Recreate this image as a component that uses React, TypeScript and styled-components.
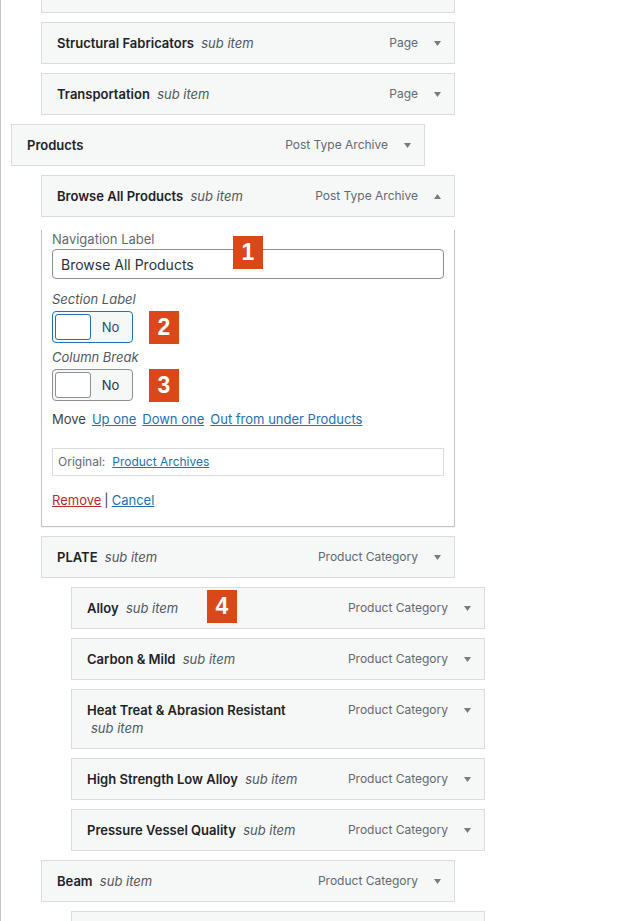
import React from 'react';
import styled, { createGlobalStyle } from 'styled-components';

const GlobalStyle = createGlobalStyle`
  html, body { margin: 0; padding: 0; background: #ffffff; overflow: hidden; }
  body {
    font-family: Inter, "Noto Sans", "Liberation Sans", sans-serif;
    -webkit-font-smoothing: antialiased;
    color: #3c434a;
  }
  *, *::before, *::after { box-sizing: border-box; }
`;

const Page = styled.div`
  height: 100vh;
  overflow: hidden;
  border-left: 1px solid #c3c4c7;
  padding-left: 10px;
`;

const MenuList = styled.ul`
  list-style: none;
  margin: -38px 0 0;
  padding: 0;
`;

const MenuItem = styled.li<{ $depth: number }>`
  margin: 9px 0 0 ${(p) => p.$depth * 30}px;
  width: 414px;
`;

const Handle = styled.div`
  position: relative;
  display: flex;
  align-items: flex-start;
  min-height: 42px;
  padding: 11px 13px 11px 15px;
  border: 1px solid #dcdcde;
  background: #f6f7f7;
  font-size: 13px;
  line-height: 18px;
`;

const Title = styled.span`
  flex: none;
  width: 213px;
  font-weight: 600;
  color: #1d2327;
`;

const SubItem = styled.span`
  margin-left: 4px;
  font-style: italic;
  font-weight: 400;
  color: #50575e;
`;

const Controls = styled.span`
  margin-left: auto;
  display: flex;
  align-items: center;
  gap: 16px;
  height: 18px;
`;

const TypeLabel = styled.span`
  color: #646970;
  font-size: 12px;
`;

const ArrowIcon = styled.svg`
  display: block;
  width: 7px;
  height: 5px;
  fill: #787c82;
`;

const Settings = styled.div`
  position: relative;
  padding: 0 10px 17px;
  border: 1px solid #c3c4c7;
  border-top: none;
  box-shadow: 0 1px 1px rgba(0, 0, 0, 0.04);
  font-size: 13px;
  line-height: 18px;
`;

const Field = styled.div<{ $gap: number }>`
  position: relative;
  margin-top: ${(p) => p.$gap}px;
`;

const FieldLabel = styled.label<{ $italic?: boolean }>`
  display: block;
  height: 18px;
  margin-bottom: ${(p) => (p.$italic ? 3 : 1)}px;
  color: ${(p) => (p.$italic ? '#50575e' : '#646970')};
  font-style: ${(p) => (p.$italic ? 'italic' : 'normal')};
`;

const TextInput = styled.input`
  display: block;
  width: 392px;
  height: 30px;
  margin: 0;
  padding: 0 8px;
  border: 1px solid #8c8f94;
  border-radius: 4px;
  background: #fff;
  font-family: inherit;
  font-size: 14px;
  color: #2c3338;
  outline: none;
`;

const ToggleRow = styled.div`
  display: flex;
  align-items: center;
  gap: 16px;
  height: 32px;
`;

const Toggle = styled.span<{ $focused?: boolean }>`
  display: flex;
  align-items: center;
  width: 81px;
  height: 32px;
  padding: 2px;
  border: 1px solid ${(p) => (p.$focused ? '#2271b1' : '#8c8f94')};
  border-radius: 4px;
  background: #f6f7f7;
`;

const Knob = styled.span<{ $focused?: boolean }>`
  flex: none;
  width: 36px;
  height: 26px;
  border: 1px solid ${(p) => (p.$focused ? '#2271b1' : '#8c8f94')};
  border-radius: 3px;
  background: #ffffff;
`;

const ToggleText = styled.span<{ $focused?: boolean }>`
  flex: 1;
  text-align: center;
  color: ${(p) => (p.$focused ? '#1f4d7a' : '#2c3338')};
  font-size: 13px;
`;

const MoveLine = styled.div`
  margin-top: 9px;
  height: 18px;
  color: #3c434a;
`;

const Link = styled.a<{ $danger?: boolean }>`
  color: ${(p) => (p.$danger ? '#b32d2e' : '#2271b1')};
  text-decoration: underline;
  cursor: pointer;
`;

const MoveLink = styled(Link)`
  margin-left: 6px;
`;

const Original = styled.div`
  margin-top: 20px;
  height: 28px;
  padding: 0 5px;
  display: flex;
  align-items: center;
  gap: 7px;
  border: 1px solid #dcdcde;
  color: #646970;
  font-size: 12px;
`;

const Actions = styled.div`
  margin-top: 15px;
  height: 18px;
  color: #3c434a;
`;

const Sep = styled.span`
  margin: 0 3px;
`;

const Badge = styled.span`
  display: inline-flex;
  align-items: center;
  justify-content: center;
  flex: none;
  width: 30px;
  height: 33px;
  background: #da4719;
  color: #ffffff;
  font-family: "Liberation Sans", Arial, sans-serif;
  font-weight: 700;
  font-size: 23px;
  line-height: 1;
`;

const OverlayBadge = styled(Badge)<{ $top: number; $left: number }>`
  position: absolute;
  top: ${(p) => p.$top}px;
  left: ${(p) => p.$left}px;
  z-index: 2;
`;

const Arrow = ({ up }: { up?: boolean }) => (
  <ArrowIcon viewBox="0 0 7 5" aria-hidden="true">
    {up ? <polygon points="0,5 7,5 3.5,0" /> : <polygon points="0,0 7,0 3.5,5" />}
  </ArrowIcon>
);

type Item = {
  id: string;
  name: string;
  sub: boolean;
  type: string;
  depth: number;
  open?: boolean;
  badge?: string;
};

const items: Item[] = [
  { id: 'hidden-above', name: '', sub: false, type: '', depth: 1 },
  { id: 'structural', name: 'Structural Fabricators', sub: true, type: 'Page', depth: 1 },
  { id: 'transport', name: 'Transportation', sub: true, type: 'Page', depth: 1 },
  { id: 'products', name: 'Products', sub: false, type: 'Post Type Archive', depth: 0 },
  { id: 'browse', name: 'Browse All Products', sub: true, type: 'Post Type Archive', depth: 1, open: true },
  { id: 'plate', name: 'PLATE', sub: true, type: 'Product Category', depth: 1 },
  { id: 'alloy', name: 'Alloy', sub: true, type: 'Product Category', depth: 2, badge: '4' },
  { id: 'carbon', name: 'Carbon & Mild', sub: true, type: 'Product Category', depth: 2 },
  { id: 'heat', name: 'Heat Treat & Abrasion Resistant', sub: true, type: 'Product Category', depth: 2 },
  { id: 'hsla', name: 'High Strength Low Alloy', sub: true, type: 'Product Category', depth: 2 },
  { id: 'pvq', name: 'Pressure Vessel Quality', sub: true, type: 'Product Category', depth: 2 },
  { id: 'beam', name: 'Beam', sub: true, type: 'Product Category', depth: 1 },
  { id: 'hidden-below', name: '', sub: false, type: '', depth: 2 },
];

const ItemSettings = () => (
  <Settings>
    <Field $gap={13}>
      <FieldLabel>Navigation Label</FieldLabel>
      <TextInput defaultValue="Browse All Products" readOnly />
      <OverlayBadge $top={6} $left={181}>1</OverlayBadge>
    </Field>
    <Field $gap={11}>
      <FieldLabel $italic>Section Label</FieldLabel>
      <ToggleRow>
        <Toggle $focused>
          <Knob $focused />
          <ToggleText $focused>No</ToggleText>
        </Toggle>
        <Badge>2</Badge>
      </ToggleRow>
    </Field>
    <Field $gap={5}>
      <FieldLabel $italic>Column Break</FieldLabel>
      <ToggleRow>
        <Toggle>
          <Knob />
          <ToggleText>No</ToggleText>
        </Toggle>
        <Badge>3</Badge>
      </ToggleRow>
    </Field>
    <MoveLine>
      Move
      <MoveLink>Up one</MoveLink>
      <MoveLink>Down one</MoveLink>
      <MoveLink>Out from under Products</MoveLink>
    </MoveLine>
    <Original>
      Original:
      <Link>Product Archives</Link>
    </Original>
    <Actions>
      <Link $danger>Remove</Link>
      <Sep>|</Sep>
      <Link>Cancel</Link>
    </Actions>
  </Settings>
);

export default function App() {
  return (
    <>
      <GlobalStyle />
      <Page>
        <MenuList>
          {items.map((it) => (
            <MenuItem key={it.id} $depth={it.depth}>
              <Handle>
                <Title>
                  {it.name}
                  {it.sub && (
                    <>
                      {' '}
                      <SubItem>sub item</SubItem>
                    </>
                  )}
                </Title>
                {it.type && (
                  <Controls>
                    <TypeLabel>{it.type}</TypeLabel>
                    <Arrow up={it.open} />
                  </Controls>
                )}
                {it.badge && (
                  <OverlayBadge $top={2} $left={135}>
                    {it.badge}
                  </OverlayBadge>
                )}
              </Handle>
              {it.open && <ItemSettings />}
            </MenuItem>
          ))}
        </MenuList>
      </Page>
    </>
  );
}
